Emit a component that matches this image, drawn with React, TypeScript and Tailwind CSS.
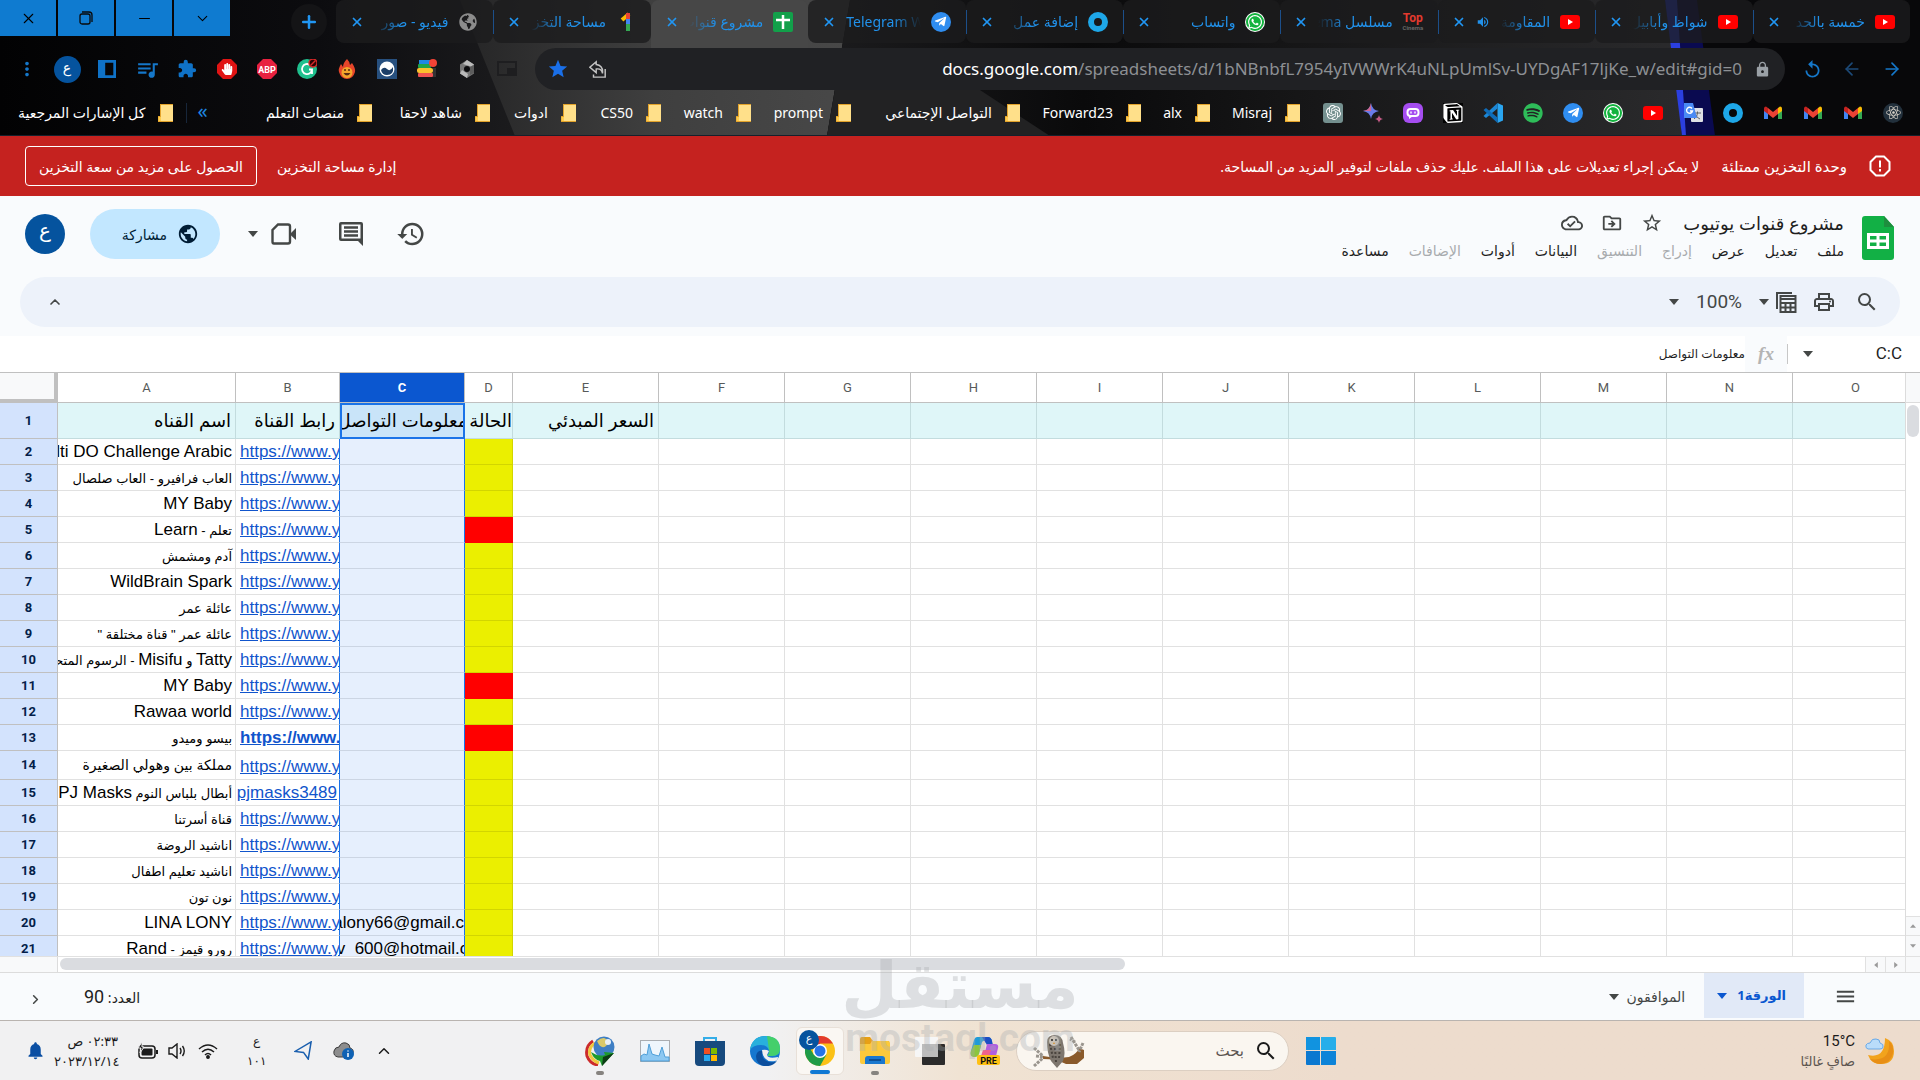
import type { ReactNode } from "react";
import { clsx } from "clsx";
import { ArrowLeft, ArrowRight, ChevronDown, ChevronLeft, ChevronUp, Minus, Plus, X } from "lucide-react";
import { FaGlobeAmericas, FaHandPaper, FaReact, FaSpotify, FaTelegramPlane, FaWhatsapp } from "react-icons/fa";
import {
  MdExtension,
  MdHistory,
  MdLock,
  MdMenu,
  MdMoreVert,
  MdNotifications,
  MdOutlineCloudDone,
  MdOutlineDriveFileMove,
  MdOutlinePrint,
  MdPublic,
  MdQueueMusic,
  MdReplay,
  MdSearch,
  MdStar,
  MdStarBorder,
  MdVolumeUp,
} from "react-icons/md";
import { SiNotion, SiOpenai } from "react-icons/si";

/* ---------- small drawings ---------- */

function Caret({ className }: { className?: string }) {
  return (
    <svg viewBox="0 0 10 6" className={clsx("shrink-0", className ?? "w-[10px] h-[6px]")}>
      <path d="M0 0h10L5 6z" fill="currentColor" />
    </svg>
  );
}

function YoutubeIcon() {
  return (
    <svg viewBox="0 0 20 20" className="size-5">
      <rect y="3" width="20" height="14" rx="3" fill="#f00" />
      <path d="M8 7l5 3-5 3z" fill="#fff" />
    </svg>
  );
}

function WhatsappIcon() {
  return (
    <span className="size-5 rounded-full bg-white flex items-center justify-center">
      <span className="size-[18px] rounded-full bg-[#12b33e] flex items-center justify-center">
        <FaWhatsapp size={16} color="#fff" />
      </span>
    </span>
  );
}

function TelegramIcon() {
  return (
    <span className="size-5 rounded-full bg-[#2f8df0] flex items-center justify-center">
      <FaTelegramPlane size={13} color="#fff" />
    </span>
  );
}

function RingIcon() {
  return (
    <svg viewBox="0 0 20 20" className="size-5">
      <circle cx="10" cy="10" r="7" fill="none" stroke="#1ea7e8" strokeWidth="6" />
    </svg>
  );
}

function GmailIcon() {
  return (
    <svg viewBox="0 0 20 20" className="size-5">
      <path d="M1 5v11h4V9z" fill="#4285f4" />
      <path d="M19 5v11h-4V9z" fill="#34a853" />
      <path d="M15 5l2-1.500q2 0 2 2V8l-4 3z" fill="#fbbc04" />
      <path d="M5 5L3 3.500q-2 0-2 2V8l4 3z" fill="#c5221f" />
      <path d="M5 5l5 4 5-4v6l-5 4-5-4z" fill="#ea4335" />
    </svg>
  );
}

function SheetsTabIcon() {
  return (
    <svg viewBox="0 0 20 20" className="size-5">
      <rect width="20" height="20" rx="2" fill="#12a04a" />
      <path d="M3 8h14M10 3v14" stroke="#fff" strokeWidth="2.500" />
    </svg>
  );
}

function GoogleOneIcon() {
  return (
    <svg viewBox="0 0 20 20" className="size-5">
      <path d="M6 8l7-6" stroke="#fbbc04" strokeWidth="4" />
      <path d="M12 1v8" stroke="#ea4335" strokeWidth="4" />
      <path d="M12 7v6" stroke="#4285f4" strokeWidth="4" />
      <path d="M12 12v7" stroke="#34a853" strokeWidth="4" />
    </svg>
  );
}

function TopCinemaIcon() {
  return (
    <span className="size-5 flex flex-col items-center justify-center font-bold font-[Roboto]">
      <span className="text-[12px] leading-[11px] text-[#e23a2e]">Top</span>
      <span className="text-[6px] leading-[7px] text-[#666]">Cinema</span>
    </span>
  );
}

function VscodeIcon() {
  return (
    <svg viewBox="0 0 20 20" className="size-5">
      <path d="M14.500 0L20 2.500v15L14.500 20z" fill="#2aa5f0" />
      <path d="M14.500 0v5.500L3 15l-2.500-2z" fill="#1c87d6" />
      <path d="M14.500 20v-5.500L3 5 .5 7z" fill="#0f6cb8" />
    </svg>
  );
}

function TranslateIcon() {
  return (
    <svg viewBox="0 0 20 20" className="size-5">
      <rect x="8" y="5" width="12" height="14" rx="1" fill="#dfe1e5" />
      <path d="M11 10h7M14.500 8.500V10q0 4-3.500 6M12 11q2 4 5 5" stroke="#5f6368" fill="none" />
      <path d="M1 0h9l4 15H1z" fill="#4a8af4" />
      <path d="M9 5.500a3 3 0 1 0 .5 2.500H7" stroke="#fff" strokeWidth="1.400" fill="none" />
    </svg>
  );
}

function SparkIcon() {
  return (
    <svg viewBox="0 0 20 20" className="size-5">
      <path d="M8 0q1 7 8 8-7 1-8 8-1-7-8-8 7-1 8-8z" fill="#6a7be8" />
      <path d="M0 8q7-1 8-8v8z" fill="#d0678e" />
      <path d="M16 12q.6 3.400 4 4-3.400.6-4 4-.6-3.400-4-4 3.400-.6 4-4z" fill="#c45a86" />
    </svg>
  );
}

function PoeIcon() {
  return (
    <svg viewBox="0 0 20 20" className="size-5">
      <rect width="20" height="20" rx="6" fill="#a54df0" />
      <rect x="3.500" y="5" width="13" height="9" rx="4" fill="#fff" />
      <path d="M6 13v3l4-3z" fill="#fff" />
      <rect x="5.500" y="7" width="9" height="5" rx="2" fill="#a54df0" />
      <path d="M8 8.500v2M12 8.500v2" stroke="#fff" strokeWidth="1.400" />
    </svg>
  );
}

function FolderIcon() {
  return (
    <svg viewBox="0 0 20 20" className="size-5 shrink-0">
      <path d="M4 1h13v18H2v-6h2z" fill="#e3a32b" />
      <path d="M5 2h12v16H5z" fill="#ffe08a" />
      <path d="M2.500 14H5v4H2.500z" fill="#ffcc4d" />
    </svg>
  );
}

function Badge({ bg, children }: { bg: string; children?: ReactNode }) {
  return (
    <svg viewBox="0 0 20 20" className="size-5">
      <path d="M6 0h8l6 6v8l-6 6H6l-6-6V6z" fill={bg} />
      {children}
    </svg>
  );
}

function GrammarIcon() {
  return (
    <svg viewBox="0 0 20 20" className="size-5">
      <circle cx="10" cy="10" r="10" fill="#1fc08e" />
      <path d="M13 6a5 5 0 1 0 2 4.500h-3M15 10.500V15" stroke="#fff" strokeWidth="1.800" fill="none" />
      <circle cx="16" cy="4" r="4" fill="#2a0505" stroke="#d62828" strokeWidth="1.400" />
      <path d="M13.500 6.500l5-5" stroke="#d62828" strokeWidth="1.400" />
    </svg>
  );
}

function FireIcon() {
  return (
    <svg viewBox="0 0 20 20" className="size-5">
      <path d="M10 0q3 3 3 6l2-2q4 6 3 9-2 7-8 7t-8-7q-1-3 2-8l2 3Q6 4 10 0z" fill="#e6452a" />
      <circle cx="10" cy="13.500" r="5.500" fill="#f4a52c" />
      <path d="M6.500 14q3.500 5 7 0z" fill="#5b2a12" />
      <path d="M8 10v2M12 10v2" stroke="#5b2a12" strokeWidth="1.500" />
    </svg>
  );
}

function WaveIcon() {
  return (
    <svg viewBox="0 0 20 20" className="size-5">
      <rect width="20" height="20" fill="#27507f" />
      <circle cx="10" cy="10" r="7.500" fill="#fff" />
      <path d="M4 11q3-4 6-1t6-2q1 8-6 8-5 0-6-5z" fill="#1c3f68" />
    </svg>
  );
}

function BooksIcon() {
  return (
    <svg viewBox="0 0 20 20" className="size-5">
      <rect x="2" y="1" width="12" height="4" fill="#1e88e5" />
      <rect x="1" y="5" width="13" height="4" rx="1" fill="#20a54a" />
      <rect x="0" y="9" width="16" height="5" rx="2" fill="#fbc02d" />
      <rect x="1" y="14" width="15" height="4" rx="1" fill="#ef5350" />
      <rect x="16" y="9" width="3" height="9" fill="#333" />
      <circle cx="16" cy="4" r="4" fill="#f44336" />
    </svg>
  );
}

function HexIcon() {
  return (
    <svg viewBox="0 0 20 20" className="size-5">
      <path d="M10 1l7 4.500v9L10 19l-7-4.500v-9z" fill="#777" />
      <path d="M10 1l7 4.500-3 2L6 5zM3 14.500L10 19l1-4-6-4z" fill="#bbb" />
      <path d="M17 6v8l-4 2V8z" fill="#5c5c5c" />
      <circle cx="10" cy="10" r="3" fill="#0c0c0e" />
    </svg>
  );
}

function VideoIcon() {
  return (
    <svg viewBox="0 0 26 24" className="w-[26px] h-6" fill="none" stroke="#444746" strokeWidth="2.400">
      <path d="M7 2.500h10q2 0 2 2v15q0 2-2 2H3q-1.500 0-1.500-2V8z" />
      <path d="M19.500 11.500L25 6v12l-5.500-5z" fill="#444746" stroke="none" />
    </svg>
  );
}

function CommentIcon() {
  return (
    <svg viewBox="0 0 26 26" className="size-[26px]">
      <path d="M3 1h20q2 0 2 2v22l-5-5H3q-2 0-2-2V3q0-2 2-2zm.5 2.500v14h19v-14z" fill="#444746" fillRule="evenodd" />
      <path d="M6 6.500h14M6 10.500h14M6 14.500h14" stroke="#444746" strokeWidth="2.400" />
    </svg>
  );
}

function SheetsLogo() {
  return (
    <svg viewBox="0 0 32 44" className="w-8 h-11">
      <path d="M3 0h19l10 11v30q0 3-3 3H3q-3 0-3-3V3q0-3 3-3z" fill="#12b045" />
      <path d="M22 0l10 11H22z" fill="#1e8e3e" />
      <path d="M5 17h22v16H5zm3 3v3.500h6.500V20zm9.500 0v3.500H24V20zM8 26.500V30h6.500v-3.500zm9.500 0V30H24v-3.500z" fill="#fff" fillRule="evenodd" />
    </svg>
  );
}

function MoonIcon() {
  return (
    <svg viewBox="0 0 30 30" className="size-[30px]">
      <path d="M20 2q9 3 9 13 0 13-13 13-10 0-13-9 17 4 17-17z" fill="#f2a31c" />
      <path d="M24 5q5 4 4 12-2 10-12 11-7 0-11-5 21 3 19-18z" fill="#e88f16" />
      <path d="M3 13q-3-1-2-4 1-2 4-2 2-5 6-4 4 0 4 4 4 1 3 4 0 2-3 2z" fill="#b9dcfa" stroke="#6aa9e6" />
    </svg>
  );
}

function WindowsIcon() {
  return (
    <svg viewBox="0 0 30 30" className="size-[30px]">
      <path d="M0 1h14v13H0z" fill="#1193e0" />
      <path d="M15 1h14q1 0 1 1v12H15z" fill="#26aeea" />
      <path d="M0 15h14v14H1q-1 0-1-1z" fill="#0b78d0" />
      <path d="M15 15h15v13q0 1-1 1H15z" fill="#0d83d8" />
    </svg>
  );
}

function OwlIcon() {
  return (
    <svg viewBox="0 0 52 34" className="w-[52px] h-[34px]">
      <path d="M10 22q14 3 26 1 8-3 10-9l5 2v8l-7 6H33q-10-5-23-5z" fill="#8a5a2b" />
      <path d="M1 14l9 8M3 22l8 1M1 32l9-8M38 3l8 13M42 8l-5-3M50 9l-4 9" stroke="#9a958e" strokeWidth="3" strokeDasharray="3 1" />
      <path d="M14 8q0-7 8-7 7 0 8 8 3 10 0 18l-6 7-6-7q-4-8-4-19z" fill="#7d766e" />
      <path d="M17 10l3 14M22 14l1 14M27 10l-1 15" stroke="#4a443e" strokeWidth="2" strokeDasharray="2 2" />
      <circle cx="21" cy="7" r="5" fill="#c9c2b8" />
      <circle cx="19" cy="6" r="1" fill="#222" />
      <circle cx="23" cy="6" r="1" fill="#222" />
      <path d="M21 8l-1 2h2z" fill="#d8922a" />
    </svg>
  );
}

function CopilotIcon() {
  return (
    <svg viewBox="0 0 30 30" className="size-[30px]">
      <path d="M7 1h11q3 0 4 4l-6 2q-1-4-4-1L9 17l-6 3q-3 0-2-5L4 4q1-3 3-3z" fill="#1f9bd8" />
      <path d="M4 9h7L9 18q-1 3-4 3-6 0-4-6z" fill="#8bc53f" />
      <path d="M12 1h6q3 0 4 4l1 4h-6z" fill="#1b4fc4" />
      <path d="M17 8h8q4 0 3 4l-2 8H14z" fill="#b05fe0" />
      <path d="M13 14h8l-2 6h-8z" fill="#f0628a" />
      <rect x="7" y="19" width="23" height="10" rx="2" fill="#ffc012" />
      <text x="18.500" y="27.500" textAnchor="middle" fontSize="9" fontWeight="700" fontFamily="Roboto" fill="#111">PRE</text>
    </svg>
  );
}

function TaskViewIcon() {
  return (
    <svg viewBox="0 0 30 30" className="size-[30px]">
      <rect x="7" y="8" width="23" height="21" rx="1" fill="#2b2b2b" />
      <rect x="0" y="1" width="23" height="20" rx="1" fill="#f6f6f6" />
      <path d="M7 8h16v13H7z" fill="#bcbcbc" />
    </svg>
  );
}

function ExplorerIcon() {
  return (
    <svg viewBox="0 0 30 30" className="size-[30px]">
      <path d="M0 3q0-2 2-2h8l3 4h16v8H0z" fill="#e8a015" />
      <path d="M0 8h10l2-3h16q2 0 2 2v19q0 2-2 2H2q-2 0-2-2z" fill="#fcc93b" />
      <path d="M5 28v-5q0-3 3-3h14q3 0 3 3v5z" fill="#1a78cf" />
      <path d="M9 24h12" stroke="#0c4f96" strokeWidth="2" />
    </svg>
  );
}

function ChromeIcon() {
  return (
    <svg viewBox="0 0 30 30" className="size-[30px]">
      <circle cx="15" cy="15" r="15" fill="#fbc116" />
      <path d="M15 15L2 7.500A15 15 0 0 1 28 7.500H15z" fill="#e33b2e" />
      <path d="M2 7.500A15 15 0 0 0 15 30l6.500-11.500L9 19z" fill="#1f9b48" />
      <circle cx="15" cy="15" r="7" fill="#fff" />
      <circle cx="15" cy="15" r="5.500" fill="#2673e8" />
    </svg>
  );
}

function EdgeIcon() {
  return (
    <svg viewBox="0 0 30 30" className="size-[30px]">
      <circle cx="15" cy="15" r="15" fill="#1577cf" />
      <path d="M0 14Q2 0 16 0q14 1 14 13 0 7-8 7h-5q3-3 2-6-2-5-8-5Q3 9 0 14z" fill="#28b0dc" />
      <path d="M17 0q13 1 13 13 0 7-8 7h-5q3-3 2-6z" fill="#44cf6b" />
      <path d="M13 15q-3 8 6 11 5 1 8-1-5 6-13 5-8-2-8-10 1-6 7-5z" fill="#0b4f9e" />
      <path d="M12 14q4-1 7 1-1 2-2 4 1 4 11 2 0 3-3 4-12 2-13-11z" fill="#f1f0f0" />
    </svg>
  );
}

function StoreIcon() {
  return (
    <svg viewBox="0 0 30 30" className="size-[30px]">
      <path d="M9 7V2h12v5" stroke="#35aee8" strokeWidth="2" fill="none" />
      <path d="M0 5h30v21q0 4-4 4H4q-4 0-4-4z" fill="#174a7e" />
      <path d="M9 12h6v6H9z" fill="#f25022" />
      <path d="M16 12h6v6h-6z" fill="#7fba00" />
      <path d="M9 19h6v6H9z" fill="#29a9f0" />
      <path d="M16 19h6v6h-6z" fill="#ffb900" />
    </svg>
  );
}

function ChartIcon() {
  return (
    <svg viewBox="0 0 30 30" className="size-[30px]">
      <rect x=".5" y="4.500" width="29" height="21" fill="#eef6fc" stroke="#a9adb1" />
      <path d="M1 25v-5l3-2 3 1 2-11 3 10 3 1 4 1 3-9 3 10 4 0v4z" fill="#8cc8f2" stroke="#4f9fd8" />
    </svg>
  );
}

function IdmIcon() {
  return (
    <svg viewBox="0 0 30 30" className="size-[30px]">
      <path d="M8 5Q0 10 2 20q3 8 11 9" stroke="#cc2b2b" strokeWidth="3" fill="none" />
      <path d="M10 7q-7 5-5 12 3 6 9 8" stroke="#f0c93c" strokeWidth="3" fill="none" />
      <circle cx="19" cy="11" r="10.500" fill="#3f7fc4" />
      <path d="M12 5q6-5 9-2 4 3 0 7-5 4-9-5z" fill="#d9c96a" />
      <circle cx="23" cy="6" r="3" fill="#e8f0f8" />
      <path d="M6 16q7 5 14 3l-1-3 10 1-12 13-2-5q-6-1-9-9z" fill="#1d9a2c" />
      <path d="M18 21l11-4-12 13z" fill="#0d3b15" />
    </svg>
  );
}

function WifiIcon() {
  return (
    <svg viewBox="0 0 20 16" className="w-5 h-4" fill="none" stroke="#1b1b1b" strokeWidth="1.500">
      <path d="M1 6q9-8 18 0M4 9q6-5.500 12 0M7 12q3-3 6 0" />
      <circle cx="10" cy="14" r="1.200" fill="#1b1b1b" />
    </svg>
  );
}

function BatteryIcon() {
  return (
    <svg viewBox="0 0 20 18" className="w-5 h-[18px]">
      <rect x="1" y="4" width="16" height="12" rx="3" fill="none" stroke="#1b1b1b" strokeWidth="1.500" />
      <rect x="3.500" y="6.500" width="11" height="7" rx="1" fill="#1b1b1b" />
      <path d="M18 8v4h2V8z" fill="#1b1b1b" />
      <path d="M4 0L0 6h3L2 11l4-6H4z" fill="#1b1b1b" stroke="#f1f1f2" />
    </svg>
  );
}

function CloudInfoIcon() {
  return (
    <svg viewBox="0 0 22 20" className="w-[22px] h-5">
      <path d="M5 16q-5-1-4-6 1-4 5-4 2-5 7-4 4 1 4 5 4 1 3 5-1 4-5 4z" fill="#8d8d8d" stroke="#3c3c3c" />
      <circle cx="15" cy="13" r="6" fill="#0f62b4" />
      <path d="M15 12v4M15 9.500v1" stroke="#fff" strokeWidth="1.500" />
    </svg>
  );
}

function CalcSheetIcon() {
  return (
    <svg viewBox="0 0 22 22" className="size-[22px]" fill="none" stroke="#444746" strokeWidth="2">
      <path d="M2 18V2h15" />
      <rect x="5.500" y="5" width="15" height="16" />
      <path d="M5 8h15M5 12h16M5 16.500h16M10.500 11v10M15.500 11v10" />
    </svg>
  );
}

function RestoreIcon() {
  return (
    <svg viewBox="0 0 14 14" className="size-[14px]" fill="none" stroke="#0a0a0a" strokeWidth="1.300">
      <rect x="1" y="3" width="10" height="10" rx="2" />
      <path d="M3 1h7q3 0 3 3v7" />
    </svg>
  );
}

/* ---------- browser chrome ---------- */

const tabs: { title: string; icon: ReactNode; active?: boolean; sound?: boolean; latin?: boolean }[] = [
  { title: "خمسة بالحد الأدنى", icon: <YoutubeIcon /> },
  { title: "شواظ وأبابيل القسام", icon: <YoutubeIcon /> },
  { title: "المقاومة الآن", icon: <YoutubeIcon />, sound: true },
  { title: "مسلسل Cinema", icon: <TopCinemaIcon /> },
  { title: "واتساب", icon: <WhatsappIcon /> },
  { title: "إضافة عمل", icon: <RingIcon /> },
  { title: "Telegram Web", icon: <TelegramIcon />, latin: true },
  { title: "مشروع قنوات يوتيوب", icon: <SheetsTabIcon />, active: true },
  { title: "مساحة التخزين", icon: <GoogleOneIcon /> },
  { title: "فيديو - صور", icon: <FaGlobeAmericas size={18} color="#8c8c8c" /> },
];

const siteMarks: { name: string; icon: ReactNode }[] = [
  {
    name: "React",
    icon: (
      <span className="size-5 rounded-full bg-[#22303c] flex items-center justify-center">
        <FaReact size={15} color="#d8d2c8" />
      </span>
    ),
  },
  { name: "Gmail", icon: <GmailIcon /> },
  { name: "Gmail 2", icon: <GmailIcon /> },
  { name: "Gmail 3", icon: <GmailIcon /> },
  { name: "Mostaql", icon: <RingIcon /> },
  { name: "Translate", icon: <TranslateIcon /> },
  { name: "YouTube", icon: <YoutubeIcon /> },
  { name: "WhatsApp", icon: <WhatsappIcon /> },
  { name: "Telegram", icon: <TelegramIcon /> },
  { name: "Spotify", icon: <FaSpotify size={20} color="#2ebd59" /> },
  { name: "VS Code", icon: <VscodeIcon /> },
  { name: "Notion", icon: <span className="size-5 bg-black"><SiNotion size={20} color="#fff" /></span> },
  { name: "Poe", icon: <PoeIcon /> },
  { name: "Bard", icon: <SparkIcon /> },
  {
    name: "ChatGPT",
    icon: (
      <span className="size-5 rounded-[3px] bg-[#74908f] flex items-center justify-center">
        <SiOpenai size={15} color="#fff" />
      </span>
    ),
  },
];

const folders = [
  { label: "Misraj", width: "w-[90px]" },
  { label: "alx", width: "w-[69px]" },
  { label: "Forward23", width: "w-[121px]" },
  { label: "التواصل الإجتماعي", width: "w-[169px]" },
  { label: "prompt", width: "w-[100px]" },
  { label: "watch", width: "w-[90px]" },
  { label: "CS50", width: "w-[85px]" },
  { label: "ادوات", width: "w-[86px]" },
  { label: "شاهد لاحقا", width: "w-[118px]" },
  { label: "منصات التعلم", width: "w-[150px]" },
];

function ChromeBackdrop() {
  return (
    <svg viewBox="0 0 1920 136" preserveAspectRatio="none" className="absolute inset-0 size-full">
      <defs>
        <linearGradient id="left" x1="0" x2="1">
          <stop offset="0" stopColor="#020203" />
          <stop offset=".6" stopColor="#0c0c0f" />
          <stop offset="1" stopColor="#1c1c1e" />
        </linearGradient>
        <linearGradient id="grey" x1="0" x2="1">
          <stop offset="0" stopColor="#252526" />
          <stop offset=".5" stopColor="#3f3f3f" />
          <stop offset="1" stopColor="#484848" />
        </linearGradient>
        <linearGradient id="right" x1="0" x2="1">
          <stop offset="0" stopColor="#1b1b1d" />
          <stop offset=".3" stopColor="#0a0a0b" />
          <stop offset=".55" stopColor="#161617" />
          <stop offset="1" stopColor="#2a2a2c" />
        </linearGradient>
      </defs>
      <path d="M0 0h530v136H0z" fill="url(#left)" />
      <path d="M460 0h390l-23 136H515z" fill="url(#grey)" />
      <path d="M850 0h820l12 136H827z" fill="url(#right)" />
      <path d="M980 90l70 46H827l8-46z" fill="#222223" />
      <path d="M1665 0h255v136h-236z" fill="#08080a" />
      <path d="M1675 0h22l18 136h-31z" fill="#0a0a50" />
      <path d="M1665 0h12l9 136h-4z" fill="#2b3fe0" />
    </svg>
  );
}

function TabStrip() {
  return (
    <div className="relative flex h-12 items-start pr-[10px]" dir="rtl">
      <div className="flex flex-1 min-w-0">
        {tabs.map((tab, i) => {
          const divided = !tab.active && !tabs[i + 1]?.active && i < tabs.length - 1;
          return (
            <div
              key={tab.title}
              className={clsx(
                "w-1/10 shrink-0 flex items-center gap-[10px] pr-[15px]",
                tab.active ? "h-12 pb-[5px] bg-[#474747] rounded-t-lg" : "h-[43px] bg-[#1b1b1d]/80 rounded-lg",
                divided ? "pl-0" : "pl-[14px]",
              )}
            >
              <span className="size-5 shrink-0 flex items-center justify-center">{tab.icon}</span>
              <span
                dir={tab.latin ? "ltr" : "rtl"}
                className={clsx(
                  "flex-1 min-w-0 overflow-hidden whitespace-nowrap text-[14px] leading-6 text-[#2191ea]",
                  tab.latin
                    ? "[mask-image:linear-gradient(to_left,transparent,black_28px)]"
                    : "[mask-image:linear-gradient(to_right,transparent,black_28px)]",
                )}
              >
                {tab.title}
              </span>
              {tab.sound && <MdVolumeUp size={14} className="text-[#2191ea] shrink-0" />}
              <button aria-label="إغلاق علامة التبويب" className="shrink-0 text-[#2196f3]">
                <X size={14} strokeWidth={3} />
              </button>
              {divided && <span className="w-px h-6 shrink-0 mr-[3px] bg-[#1c4f8a]" />}
            </div>
          );
        })}
      </div>
      <button aria-label="علامة تبويب جديدة" className="size-9 mt-1 mr-[9px] rounded-full bg-[#141416] flex items-center justify-center text-[#2196f3]">
        <Plus size={20} strokeWidth={3} />
      </button>
      <div className="flex gap-[2px] mr-[61px] h-9 text-black" dir="ltr">
        {[X, RestoreIcon, Minus, ChevronDown].map((Icon, i) => (
          <button key={i} aria-label={["إغلاق", "استعادة", "تصغير", "بحث"][i]} className="w-14 h-full bg-[#0f7bd0] flex items-center justify-center">
            <Icon size={17} strokeWidth={1.500} />
          </button>
        ))}
      </div>
    </div>
  );
}

const extensions: { name: string; icon: ReactNode }[] = [
  { name: "المزيد", icon: <MdMoreVert size={22} color="#1577c9" /> },
  {
    name: "الملف الشخصي",
    icon: <span className="size-[27px] rounded-full bg-[#05539e] text-white text-[14px] flex items-center justify-center pb-1">ع</span>,
  },
  {
    name: "اللوحة الجانبية",
    icon: (
      <svg viewBox="0 0 20 20" className="size-[18px]">
        <path d="M0 0h20v20H0zm8 3v14h9V3z" fill="#0f72c7" fillRule="evenodd" />
      </svg>
    ),
  },
  { name: "الوسائط", icon: <MdQueueMusic size={25} color="#1577c9" /> },
  { name: "الإضافات", icon: <MdExtension size={20} color="#0f72c7" /> },
  {
    name: "AdBlock",
    icon: (
      <span className="relative">
        <Badge bg="#e01414" />
        <FaHandPaper size={12} color="#fff" className="absolute inset-1" />
      </span>
    ),
  },
  {
    name: "Adblock Plus",
    icon: (
      <Badge bg="#e8213f">
        <text x="10" y="13.500" textAnchor="middle" fontSize="9" fontWeight="700" fontFamily="Roboto" fill="#fff">ABP</text>
      </Badge>
    ),
  },
  { name: "Grammarly", icon: <GrammarIcon /> },
  { name: "Fire", icon: <FireIcon /> },
  { name: "Wave", icon: <WaveIcon /> },
  { name: "Books", icon: <BooksIcon /> },
  { name: "Hexagon", icon: <HexIcon /> },
  {
    name: "نافذة ضمن النافذة",
    icon: (
      <svg viewBox="0 0 20 16" className="w-5 h-4">
        <rect x="1" y="1" width="18" height="13" fill="none" stroke="#1e1e20" strokeWidth="2" />
        <path d="M10 7h9v7h-9z" fill="#1e1e20" />
      </svg>
    ),
  },
];

function AddressRow() {
  return (
    <div className="relative flex h-[42px] items-center pl-[7px] pr-2" dir="ltr">
      {extensions.map((ext) => (
        <button key={ext.name} aria-label={ext.name} className="w-10 h-10 shrink-0 flex items-center justify-center">
          {ext.icon}
        </button>
      ))}
      <div className="flex-1 min-w-0 h-full ml-2 mr-[7px] rounded-full bg-[#202124] flex items-center px-3">
        <MdStar size={22} color="#1a6fe8" className="shrink-0" />
        <svg viewBox="0 0 20 20" className="size-[18px] ml-5 shrink-0" fill="none" stroke="#c4c4c4" strokeWidth="1.600">
          <path d="M8 2L1 8l7 6v-4q6-1 7 5 1-9-7-10z" />
          <path d="M18 10v9H5v-3" />
        </svg>
        <p className="flex-1 min-w-0 text-right text-[17px] whitespace-nowrap text-[#8d9094] mr-3">
          <span className="text-white">docs.google.com</span>
          /spreadsheets/d/1bNBnbfL7954yIVWWrK4uNLpUmlSv-UYDgAF17ljKe_w/edit#gid=0
        </p>
        <MdLock size={17} color="#9aa0a6" className="shrink-0 mr-[2px]" />
      </div>
      <button aria-label="إعادة التحميل" className="w-10 flex justify-center text-[#1577c9]"><MdReplay size={21} /></button>
      <button aria-label="التالي" className="w-10 flex justify-center text-[#1c4a78]"><ArrowLeft size={20} /></button>
      <button aria-label="السابق" className="w-10 flex justify-center text-[#1577c9]"><ArrowRight size={20} /></button>
    </div>
  );
}

function BookmarkBar() {
  return (
    <nav className="relative flex h-[46px] items-center pr-[7px] border-b border-[#16202c] text-white text-[14px]" dir="rtl">
      {siteMarks.map((mark) => (
        <a key={mark.name} href="#" aria-label={mark.name} className="w-10 shrink-0 flex justify-center">
          {mark.icon}
        </a>
      ))}
      <div className="flex flex-1 min-w-0 pr-[10px]">
        {folders.map((f) => (
          <button key={f.label} className={clsx("flex items-center gap-[11px] shrink-0 whitespace-nowrap", f.width)}>
            <FolderIcon />
            {f.label}
          </button>
        ))}
      </div>
      <button aria-label="المزيد من الإشارات" className="text-[#1f86e0] text-[20px] leading-5 pb-1" dir="ltr">«</button>
      <span className="w-px h-5 bg-[#17263a] mx-[10px]" />
      <button className="flex items-center gap-[11px] pl-[18px] whitespace-nowrap">
        <FolderIcon />
        كل الإشارات المرجعية
      </button>
    </nav>
  );
}

/* ---------- sheets header ---------- */

function StorageBanner() {
  return (
    <div className="flex h-[60px] items-center bg-[#c5221f] text-white text-[14px] pr-[29px] pl-[25px] whitespace-nowrap" dir="rtl">
      <svg viewBox="0 0 22 22" className="size-[22px] ml-[22px]" fill="none" stroke="#fff" strokeWidth="2">
        <path d="M7 1.500h8L20.500 7v8L15 20.500H7L1.500 15V7z" />
        <path d="M11 5.500v7M11 14v2.500" />
      </svg>
      <strong className="ml-[22px] text-[15px] font-normal">وحدة التخزين ممتلئة</strong>
      <span className="flex-1">لا يمكن إجراء تعديلات على هذا الملف. عليك حذف ملفات لتوفير المزيد من المساحة.</span>
      <a href="#" className="ml-5">إدارة مساحة التخزين</a>
      <button className="h-10 px-[13px] border border-white rounded">الحصول على مزيد من سعة التخزين</button>
    </div>
  );
}

const menus = [
  { label: "ملف" },
  { label: "تعديل" },
  { label: "عرض" },
  { label: "إدراج", off: true },
  { label: "التنسيق", off: true },
  { label: "البيانات" },
  { label: "أدوات" },
  { label: "الإضافات", off: true },
  { label: "مساعدة" },
];

function DocHeader() {
  return (
    <header className="flex h-[81px] items-start pr-[26px] pl-[25px] pt-[13px]" dir="rtl">
      <div className="pt-[7px] ml-[18px]"><SheetsLogo /></div>
      <div className="flex-1 min-w-0">
        <div className="flex items-center gap-[18px] h-7 text-[#444746]">
          <h1 className="text-[18px] leading-7 text-[#1f1f1f] ml-[2px]">مشروع قنوات يوتيوب</h1>
          <button aria-label="تمييز بنجمة"><MdStarBorder size={22} /></button>
          <button aria-label="نقل"><MdOutlineDriveFileMove size={22} /></button>
          <button aria-label="حالة المستند"><MdOutlineCloudDone size={22} /></button>
        </div>
        <nav className="flex gap-5 text-[14px] leading-7">
          {menus.map((m) => (
            <button key={m.label} className={m.off ? "text-[#a8abae]" : "text-[#1f1f1f]"}>{m.label}</button>
          ))}
        </nav>
      </div>
      <div className="flex items-center h-[50px] text-[#444746]">
        <button aria-label="السجل" className="ml-8"><MdHistory size={30} /></button>
        <button aria-label="التعليقات" className="ml-[41px]"><CommentIcon /></button>
        <button aria-label="مكالمة" className="ml-[13px]"><VideoIcon /></button>
        <Caret className="w-[10px] h-[6px] ml-[28px]" />
        <button className="h-[50px] w-[130px] rounded-full bg-[#c2e7ff] text-[#001d35] flex items-center gap-[10px] pr-[21px] text-[14px]">
          <MdPublic size={22} />
          مشاركة
        </button>
        <button aria-label="الحساب" className="size-10 mr-[25px] rounded-full bg-[#05539e] text-white text-[20px] flex items-center justify-center pb-2">ع</button>
      </div>
    </header>
  );
}

function Toolbar() {
  return (
    <div className="flex h-[50px] items-center mx-5 rounded-full bg-[#edf2fa] text-[#444746] pr-[21px] pl-[27px]" dir="rtl">
      <button aria-label="بحث"><MdSearch size={24} /></button>
      <button aria-label="طباعة" className="mr-[19px]"><MdOutlinePrint size={24} /></button>
      <button aria-label="عامل التصفية" className="flex items-center gap-[6px] mr-[15px]"><CalcSheetIcon /><Caret /></button>
      <button className="flex items-center gap-[17px] mr-[17px] text-[19px] font-[Roboto]" dir="ltr">
        <Caret />100%
      </button>
      <button aria-label="إخفاء القوائم" className="mr-auto"><ChevronUp size={16} strokeWidth={2.500} /></button>
    </div>
  );
}

function FormulaBar() {
  return (
    <div className="flex h-9 mt-[9px] items-center bg-white pr-[18px]" dir="rtl">
      <label htmlFor="name-box" className="sr-only">مربع الاسم</label>
      <input id="name-box" defaultValue="C:C" dir="ltr" className="w-16 text-[17px] text-right text-[#1f1f1f] font-[Roboto] outline-none" />
      <Caret className="w-[10px] h-[6px] mr-[25px] text-[#444746]" />
      <span className="w-px h-5 mr-[15px] bg-[#c7c7c7]" />
      <span className="w-[42px] h-full bg-[#f9fbfd] flex items-center justify-center text-[19px] italic font-bold text-[#b4b4b4] font-['Liberation_Serif']">fx</span>
      <label htmlFor="formula" className="sr-only">الصيغة</label>
      <input id="formula" defaultValue="معلومات التواصل" className="flex-1 min-w-0 text-[12px] text-[#1f1f1f] outline-none" />
    </div>
  );
}

/* ---------- grid ---------- */

const url = "https://www.youtube.com/";

type Row = { name: string; link?: string; contact?: string; red?: boolean; boldLink?: boolean; tall?: boolean };

const rows: Row[] = [
  { name: "Multi DO Challenge Arabic" },
  { name: "العاب فرافيرو - العاب صلصال" },
  { name: "MY Baby" },
  { name: "تعلم - Learn", red: true },
  { name: "آدم ومشمش" },
  { name: "WildBrain Spark" },
  { name: "عائلة عمر" },
  { name: "عائلة عمر \" قناة مختلقة \"" },
  { name: "Tatty و Misifu - الرسوم المتحركة" },
  { name: "MY Baby", red: true },
  { name: "Rawaa world" },
  { name: "بيسو وميدو", red: true, boldLink: true },
  { name: "مملكة بين وهولي الصغيرة", tall: true },
  { name: "أبطال بلباس النوم PJ Masks", link: "https://www.youtube.com/@pjmasks3489" },
  { name: "قناة أسرتنا" },
  { name: "اناشيد الروضة" },
  { name: "اناشيد تعليم اطفال" },
  { name: "نون تون" },
  { name: "LINA LONY", contact: "linalony66@gmail.com" },
  { name: "رورو قيمز - Rand", contact: "ranv_600@hotmail.com" },
];

const blankCols = ["F", "G", "H", "I", "J", "K", "L", "M", "N", "O"];
const letters = ["A", "B", "C", "D", "E", ...blankCols];
const headings = ["اسم القناه", "رابط القناة", "معلومات التواصل", "الحالة", "السعر المبدئي"];

// Arabic glyphs run large next to Liberation Sans, so their runs get a smaller size
function Mixed({ text }: { text: string }) {
  return text.split(/([A-Za-z]+(?: [A-Za-z]+)*)/).filter(Boolean).map((part, i) =>
    /[A-Za-z]/.test(part) ? <span key={i}>{part}</span> : <span key={i} className="text-[13px]">{part}</span>,
  );
}

function Grid() {
  return (
    <div className="flex flex-1 min-h-0 border-t border-[#c0c0c0] bg-white">
      <div className="flex-1 min-w-0 overflow-hidden" dir="ltr">
        <table className="table-fixed w-[1919px] border-separate border-spacing-0 font-['Liberation_Sans','DejaVu_Sans',sans-serif] text-[17px] leading-5 text-black">
          <colgroup>
            <col className="w-[58px]" />
            <col className="w-[178px]" />
            <col className="w-[104px]" />
            <col className="w-[125px]" />
            <col className="w-[48px]" />
            <col className="w-[146px]" />
            {blankCols.map((c) => <col key={c} className="w-[126px]" />)}
          </colgroup>
          <thead>
            <tr className="h-[30px] font-[Roboto] text-[13px] text-[#575a5a]">
              <td className="bg-[#f8f9fa] border-r-4 border-b-4 border-[#c0c0c0]" />
              {letters.map((l) => (
                <th
                  key={l}
                  scope="col"
                  className={clsx(
                    "p-0 border-r border-b border-[#c0c0c0]",
                    l === "C" ? "bg-[#0b57d0] text-white font-bold" : "font-normal",
                  )}
                >
                  {l}
                </th>
              ))}
            </tr>
          </thead>
          <tbody>
            <tr className="h-9 bg-[#dff6f8] text-[18px]">
              <th scope="row" className="p-0 bg-[#d3e3fd] border-r border-b border-[#c0c0c0] text-[13px] font-bold font-[Roboto] text-[#041e49]">1</th>
              {headings.map((h, i) => (
                <td
                  key={h}
                  className={clsx(
                    "p-0",
                    i === 2 ? "border-2 border-[#1a73e8] bg-[#c9e4f9]" : "border-r border-b border-[#c3dcde]",
                  )}
                >
                  <div className={clsx("flex overflow-hidden whitespace-nowrap leading-7", i === 2 ? "justify-center" : i !== 3 && "pr-1")} dir="rtl">
                    <span>{h}</span>
                  </div>
                </td>
              ))}
              {blankCols.map((c) => <td key={c} className="border-r border-b border-[#c3dcde]" />)}
            </tr>
            {rows.map((r, i) => (
              <tr key={i} className={r.tall ? "h-[29px]" : "h-[26px]"}>
                <th scope="row" className="p-0 bg-[#d3e3fd] border-r border-b border-[#c0c0c0] text-[13px] font-bold font-[Roboto] text-[#041e49]">
                  {i + 2}
                </th>
                <td className="p-0 border-r border-b border-[#e1e1e1]">
                  <div className="overflow-hidden whitespace-nowrap pr-[3px] h-6 leading-6" dir="rtl">
                    {r.tall ? <span className="text-[14px]">{r.name}</span> : <Mixed text={r.name} />}
                  </div>
                </td>
                <td className="p-0 align-bottom border-r border-b border-[#e1e1e1] border-r-[#1a73e8]">
                  <div className={clsx("overflow-hidden whitespace-nowrap h-6 leading-6", r.link ? "pr-[2px]" : "pl-1")} dir={r.link ? "rtl" : "ltr"}>
                    <a href="#" className={clsx("text-[#1155cc] underline", r.boldLink && "font-bold")}>
                      <bdi>{r.link ?? url}</bdi>
                    </a>
                  </div>
                </td>
                <td className="p-0 align-bottom bg-[#e6effd] border-r border-b border-[#ccd5e3] border-r-[#1a73e8]">
                  <div className="flex justify-center overflow-hidden whitespace-nowrap h-6 leading-6">{r.contact}</div>
                </td>
                <td className={clsx("border-r border-b", r.red ? "bg-[#ff0000] border-[#ff0000]" : "bg-[#ebef00] border-[#d2d500]")} />
                <td className="border-r border-b border-[#e1e1e1]" />
                {blankCols.map((c) => <td key={c} className="border-r border-b border-[#e1e1e1]" />)}
              </tr>
            ))}
          </tbody>
        </table>
      </div>
      <div className="w-[15px] flex flex-col border-l border-[#dcdcdc]">
        <div className="h-[30px] bg-[#f8f9fa] border-b border-[#dcdcdc]" />
        <div className="mt-[2px] mx-px h-[32px] rounded-full bg-[#dadce0]" />
        <button aria-label="أعلى" className="mt-auto h-5 bg-[#f8f9fa] border-y border-[#e1e1e1] flex items-center justify-center text-[#9a9a9a]">
          <Caret className="rotate-180 w-[6px] h-[4px]" />
        </button>
        <button aria-label="أسفل" className="h-5 bg-[#f8f9fa] flex items-center justify-center text-[#9a9a9a]">
          <Caret className="w-[6px] h-[4px]" />
        </button>
      </div>
    </div>
  );
}

function HorizontalScroll() {
  return (
    <div className="flex h-4 border-t border-[#e1e1e1] bg-white" dir="ltr">
      <div className="w-[58px] bg-[#f8f9fa] border-r border-[#dcdcdc]" />
      <div className="flex-1 py-px pl-[2px]"><div className="h-3 w-[59%] rounded-full bg-[#dadce0]" /></div>
      {["يسار", "يمين"].map((label, i) => (
        <button key={label} aria-label={label} className="w-5 bg-[#f8f9fa] border-l border-[#e1e1e1] flex items-center justify-center text-[#9a9a9a]">
          <Caret className={i === 0 ? "rotate-90 w-[6px] h-[4px]" : "-rotate-90 w-[6px] h-[4px]"} />
        </button>
      ))}
      <div className="w-[15px] bg-[#f8f9fa] border-l border-[#e1e1e1]" />
    </div>
  );
}

function SheetBar() {
  return (
    <div className="flex h-[48px] items-center border-t border-[#dcdcdc] bg-[#f9fbfd] text-[#444746] pr-[63px] pl-[28px] text-[14px]" dir="rtl">
      <button aria-label="كل الأوراق"><MdMenu size={23} /></button>
      <button className="h-[45px] self-start mr-[30px] pr-[18px] pl-[13px] bg-[#e1e9f7] text-[#0b57d0] text-[13px] font-bold flex items-center gap-[10px]">
        الورقة1
        <Caret />
      </button>
      <button className="flex items-center gap-[8px] mr-[19px]">
        الموافقون
        <Caret />
      </button>
      <p className="mr-auto ml-[41px] text-[#1f1f1f]">
        العدد: <span className="text-[18px] font-[Roboto]">90</span>
      </p>
      <button aria-label="عرض اللوحة" className="pt-[6px]"><ChevronLeft size={15} strokeWidth={2.500} className="rotate-180" /></button>
    </div>
  );
}

/* ---------- taskbar ---------- */

const pinned: { name: string; icon: ReactNode; running?: boolean }[] = [
  { name: "Copilot", icon: <CopilotIcon /> },
  { name: "عرض المهام", icon: <TaskViewIcon /> },
  { name: "مستكشف الملفات", icon: <ExplorerIcon />, running: true },
  { name: "Chrome", icon: <ChromeIcon /> },
  { name: "Edge", icon: <EdgeIcon /> },
  { name: "Microsoft Store", icon: <StoreIcon /> },
  { name: "مراقب الأداء", icon: <ChartIcon /> },
  { name: "IDM", icon: <IdmIcon />, running: true },
];

function Taskbar() {
  return (
    <footer
      className="flex h-[60px] items-center px-[25px] border-t border-[#b9b4b0] bg-linear-to-r from-[#f1f1f2] from-40% via-[#f0e3d3] via-50% to-[#eddccd] to-70% text-[#1b1b1b]"
      dir="rtl"
    >
      <div className="flex-1 flex items-center">
        <MoonIcon />
        <p className="mr-[10px] text-[13px] leading-5">
          <span className="block text-[15px] text-right font-[Roboto]" dir="ltr">15°C</span>
          <span className="block text-[#5c5550]">صافٍ غالبًا</span>
        </p>
      </div>
      <button aria-label="ابدأ" className="mr-2"><WindowsIcon /></button>
      <div className="mr-[17px] w-[273px] h-10 rounded-full bg-[#faf6f0] border border-[#dccfc2] flex items-center pr-[10px] pl-4">
        <MdSearch size={24} />
        <label htmlFor="search" className="sr-only">بحث</label>
        <input id="search" placeholder="بحث" className="flex-1 min-w-0 mr-[10px] text-[15px] outline-none placeholder:text-[#5c5550]" />
        <OwlIcon />
      </div>
      <div className="flex gap-[7px] mr-[7px]">
        {pinned.map((app) => (
          <button
            key={app.name}
            aria-label={app.name}
            className={clsx(
              "relative w-12 h-12 rounded-md flex items-center justify-center",
              app.name === "Chrome" && "bg-[#faf7f3] border border-[#e8e0d8]",
            )}
          >
            {app.icon}
            {app.name === "Chrome" && (
              <>
                <span className="absolute left-[2px] top-[2px] size-5 rounded-full bg-[#05539e] text-white text-[11px] leading-4">ع</span>
                <span className="absolute bottom-0 w-5 h-1 rounded-full bg-[#1079d4]" />
              </>
            )}
            {app.running && <span className="absolute bottom-0 w-2 h-1 rounded-full bg-[#86837f]" />}
          </button>
        ))}
      </div>
      <div className="flex-1 flex items-center justify-end">
        <button aria-label="إظهار الرموز المخفية"><ChevronUp size={18} /></button>
        <span className="mr-5"><CloudInfoIcon /></span>
        <svg viewBox="0 0 20 20" className="size-[19px] mr-5" fill="none" stroke="#1a5fae" strokeWidth="1.600">
          <path d="M18 1L1 11l9 1 5 7z" />
        </svg>
        <button className="mr-7 text-[12px] leading-5 text-center">
          <span className="block">ع</span>
          <span className="block">١٠١</span>
        </button>
        <button aria-label="الشبكة والصوت والبطارية" className="flex items-center gap-[10px] mr-[29px]">
          <WifiIcon />
          <svg viewBox="0 0 20 16" className="w-5 h-4" fill="none" stroke="#1b1b1b" strokeWidth="1.400">
            <path d="M1 5h3l5-4v14l-5-4H1zM12 5q2 3 0 6M14.500 3q3.500 5 0 10" />
          </svg>
          <BatteryIcon />
        </button>
        <p className="mr-[20px] w-[64px] text-[13px] leading-5 whitespace-nowrap">
          <span className="block">٠٢:٣٣ ص</span>
          <span className="block" dir="ltr">٢٠٢٣/١٢/١٤</span>
        </p>
        <button aria-label="الإشعارات" className="mr-2"><MdNotifications size={21} color="#0b4fa3" /></button>
      </div>
    </footer>
  );
}

function Watermark() {
  return (
    <div className="absolute bottom-[26px] inset-x-0 flex flex-col items-center pointer-events-none text-[#a8adb0]/35 font-bold" dir="rtl">
      <span className="text-[65px] leading-[72px] font-['DejaVu_Sans']">مستقل</span>
      <span className="text-[39px] leading-8 font-[Roboto]" dir="ltr">mostaql.com</span>
    </div>
  );
}

export default function App() {
  return (
    <div className="relative h-screen flex flex-col overflow-hidden bg-[#f9fbfd] font-['Noto_Sans','DejaVu_Sans',sans-serif]">
      <div className="relative bg-black">
        <ChromeBackdrop />
        <TabStrip />
        <AddressRow />
        <BookmarkBar />
      </div>
      <StorageBanner />
      <DocHeader />
      <Toolbar />
      <FormulaBar />
      <Grid />
      <HorizontalScroll />
      <SheetBar />
      <Taskbar />
      <Watermark />
    </div>
  );
}
